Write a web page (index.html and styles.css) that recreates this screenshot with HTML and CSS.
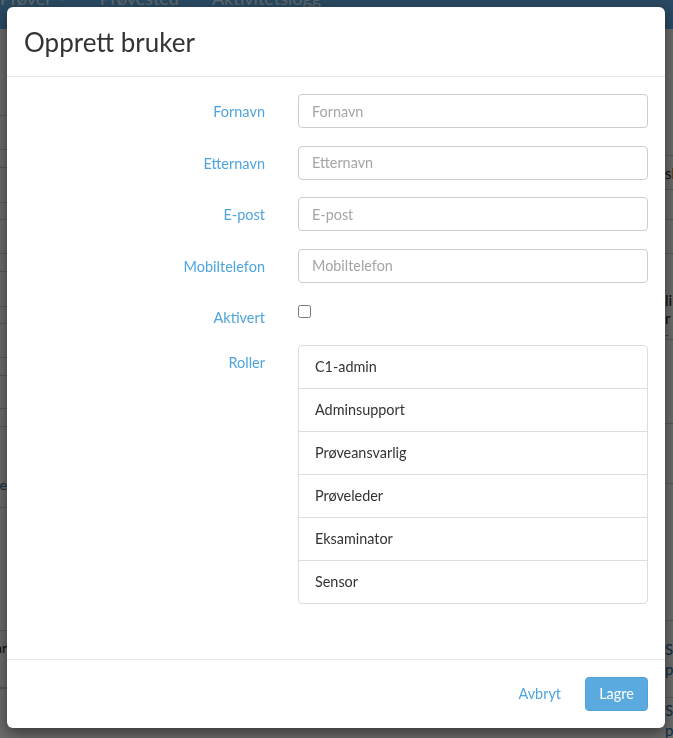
FILE: index.html
```html
<!DOCTYPE html>
<html lang="no">
<head>
<meta charset="utf-8">
<title>Opprett bruker</title>
<link rel="stylesheet" href="styles.css">
</head>
<body>
<div class="page">
  <nav class="topnav">
    <span class="nav-item">Prøver <span class="caret"></span></span>
    <span class="nav-item">Prøvested</span>
    <span class="nav-item">Aktivitetslogg</span>
  </nav>
  <div class="content">
    <div class="col-left">
      <div class="row row-top"></div>
      <div class="row row-a"></div><div class="row row-b"></div>
      <div class="row row-a2"></div><div class="row row-b2"></div>
      <div class="row row-a"></div><div class="row row-b"></div>
      <div class="row row-a2"></div><div class="row row-b2"></div>
      <div class="row row-a"></div><div class="row row-b"></div>
      <div class="row row-a3"></div><div class="row row-b"></div>
      <div class="row row-link"><span class="link">Brukere</span></div>
      <div class="row row-tall"></div>
      <div class="row row-text"><span class="txt">Eksaminar</span></div>
      <div class="row"></div>
    </div>
    <div class="col-right">
      <div class="row rr-top"></div>
      <div class="row rr-1"><span class="txt">slett</span></div>
      <div class="row rr-2"></div>
      <div class="row rr-3"></div>
      <div class="row rr-4"><span class="txt">linje</span><span class="txt">r tid</span><span class="small">-</span></div>
      <div class="row rr-5"></div>
      <div class="row rr-6"></div>
      <div class="row rr-7"></div>
      <div class="row rr-8"><span class="link">Se</span><span class="link">profil</span></div>
      <div class="row rr-9"><span class="link">Se</span><span class="link">profil</span></div>
    </div>
  </div>
</div>
<div class="backdrop"></div>
<div class="modal" role="dialog" aria-labelledby="modal-title">
  <header class="modal-header">
    <h4 class="modal-title" id="modal-title">Opprett bruker</h4>
  </header>
  <form class="modal-body">
    <div class="form-group">
      <label class="form-label" for="fornavn">Fornavn</label>
      <input class="form-control" id="fornavn" type="text" placeholder="Fornavn">
    </div>
    <div class="form-group">
      <label class="form-label" for="etternavn">Etternavn</label>
      <input class="form-control" id="etternavn" type="text" placeholder="Etternavn">
    </div>
    <div class="form-group">
      <label class="form-label" for="epost">E-post</label>
      <input class="form-control" id="epost" type="text" placeholder="E-post">
    </div>
    <div class="form-group">
      <label class="form-label" for="mobil">Mobiltelefon</label>
      <input class="form-control" id="mobil" type="text" placeholder="Mobiltelefon">
    </div>
    <div class="form-group">
      <label class="form-label" for="aktivert">Aktivert</label>
      <div class="check-wrap"><input class="checkbox" id="aktivert" type="checkbox"></div>
    </div>
    <div class="form-group">
      <label class="form-label">Roller</label>
      <ul class="list-group">
        <li class="list-group-item">C1-admin</li>
        <li class="list-group-item">Adminsupport</li>
        <li class="list-group-item">Prøveansvarlig</li>
        <li class="list-group-item">Prøveleder</li>
        <li class="list-group-item">Eksaminator</li>
        <li class="list-group-item">Sensor</li>
      </ul>
    </div>
  </form>
  <footer class="modal-footer">
    <button class="btn btn-link" type="button">Avbryt</button>
    <button class="btn btn-primary" type="button">Lagre</button>
  </footer>
</div>
</body>
</html>
```

FILE: styles.css
```css
* { box-sizing: border-box; }

html, body {
  margin: 0;
  padding: 0;
  height: 100%;
  overflow: hidden;
}

body {
  font-family: Lato, "Open Sans", "Liberation Sans", sans-serif;
  font-size: 14px;
  line-height: 20px;
  color: #333;
  background: #fff;
}

/* ---------- background page ---------- */
.page {
  height: 738px;
  display: flex;
  flex-direction: column;
}

.topnav {
  height: 29px;
  flex: none;
  background: #62b0e9;
  display: flex;
  align-items: flex-start;
  gap: 33px;
  padding-left: 0;
  overflow: hidden;
}

.nav-item {
  margin-top: -13px;
  font-size: 18px;
  line-height: 22px;
  color: rgba(255, 255, 255, 0.85);
  white-space: nowrap;
  display: flex;
  align-items: center;
  gap: 5px;
}

.caret {
  width: 0;
  height: 0;
  border-left: 5px solid transparent;
  border-right: 5px solid transparent;
  border-top: 5px solid rgba(255, 255, 255, 0.85);
}

.content {
  flex: 1;
  display: flex;
  justify-content: space-between;
}

.col-left,
.col-right {
  display: flex;
  flex-direction: column;
  overflow: hidden;
}

.col-left { width: 7px; }
.col-right { width: 8px; }

.row {
  border-bottom: 1px solid #cfcfcf;
  display: flex;
  flex-direction: column;
  white-space: nowrap;
  flex: none;
}

.col-left .row { align-items: flex-end; }
.col-right .row { align-items: flex-start; }

.row-top { height: 87px; }
.row-a { height: 34px; }
.row-a2 { height: 35px; }
.row-a3 { height: 33px; }
.row-b { height: 18px; }
.row-b2 { height: 17px; }
.row-link { height: 81px; justify-content: flex-end; padding-bottom: 12px; }
.row-tall { height: 123px; }
.row-text { height: 57px; justify-content: flex-start; padding-top: 7px; }

.rr-top { height: 127px; }
.rr-1 { height: 34px; justify-content: center; font-size: 15px; }
.rr-2 { height: 30px; }
.rr-3 { height: 34px; }
.rr-4 { height: 86px; justify-content: flex-start; padding-top: 37px; font-size: 15px; line-height: 18px; }
.rr-5 { height: 84px; }
.rr-6 { height: 60px; }
.rr-7 { height: 137px; }
.rr-8 { height: 77px; justify-content: center; font-size: 15px; }
.rr-9 { height: 60px; justify-content: flex-start; padding-top: 2px; font-size: 15px; }

.link { color: #2f6e9f; }
.txt { color: #222; }
.small { font-size: 10px; line-height: 8px; margin-top: 3px; color: #555; }

/* ---------- backdrop ---------- */
.backdrop {
  position: fixed;
  inset: 0;
  background: rgba(0, 0, 0, 0.58);
}

/* ---------- modal ---------- */
.modal {
  position: fixed;
  top: 7px;
  left: 7px;
  width: 658px;
  background: #fff;
  border-radius: 6px;
  box-shadow: 0 5px 15px rgba(0, 0, 0, 0.5);
}

.modal-header {
  padding: 17px 17px 16px;
  border-bottom: 1px solid #e5e5e5;
}

.modal-title {
  margin: 0;
  font-size: 26px;
  line-height: 36px;
  font-weight: 400;
  color: #333;
}

.modal-body {
  margin: 0;
  padding: 17px 17px 55px;
  display: flex;
  flex-direction: column;
  gap: 17.5px;
}

.form-group {
  display: grid;
  grid-template-columns: 241px 350px;
  column-gap: 33px;
  align-items: start;
}

.form-label {
  text-align: right;
  padding-top: 7px;
  line-height: 21px;
  height: 27px;
  font-size: 14.5px;
  color: #4ea5dd;
}

.form-control {
  height: 34px;
  width: 100%;
  padding: 6px 13px;
  border: 1px solid #ccc;
  border-radius: 4px;
  font-family: inherit;
  font-size: 14.4px;
  line-height: 20px;
  color: #555;
  background: #fff;
}

.form-control::placeholder {
  color: #a5a5a5;
  opacity: 1;
}

.check-wrap {
  padding-top: 5px;
  height: 27px;
  display: flex;
  align-items: flex-start;
}

.checkbox {
  margin: 0;
  width: 13px;
  height: 13px;
}

.list-group {
  list-style: none;
  margin: 0;
  padding: 0;
  border: 1px solid #ddd;
  border-radius: 4px;
}

.list-group-item {
  padding: 11px 16px;
  line-height: 20px;
  font-size: 14.4px;
  color: #333;
}

.list-group-item + .list-group-item {
  border-top: 1px solid #ddd;
}

.modal-footer {
  border-top: 1px solid #e5e5e5;
  padding: 17px;
  display: flex;
  justify-content: flex-end;
  align-items: center;
  gap: 11px;
}

.btn {
  font-family: inherit;
  font-size: 14.4px;
  line-height: 20px;
  height: 34px;
  padding: 6px 12px;
  border: 1px solid transparent;
  border-radius: 4px;
  background: transparent;
  cursor: pointer;
}

.btn-link {
  color: #4ea5dd;
}

.btn-primary {
  background: #5aaadf;
  border-color: #52a2d8;
  color: #fff;
  padding: 6px 13px;
  min-width: 63px;
}
```
